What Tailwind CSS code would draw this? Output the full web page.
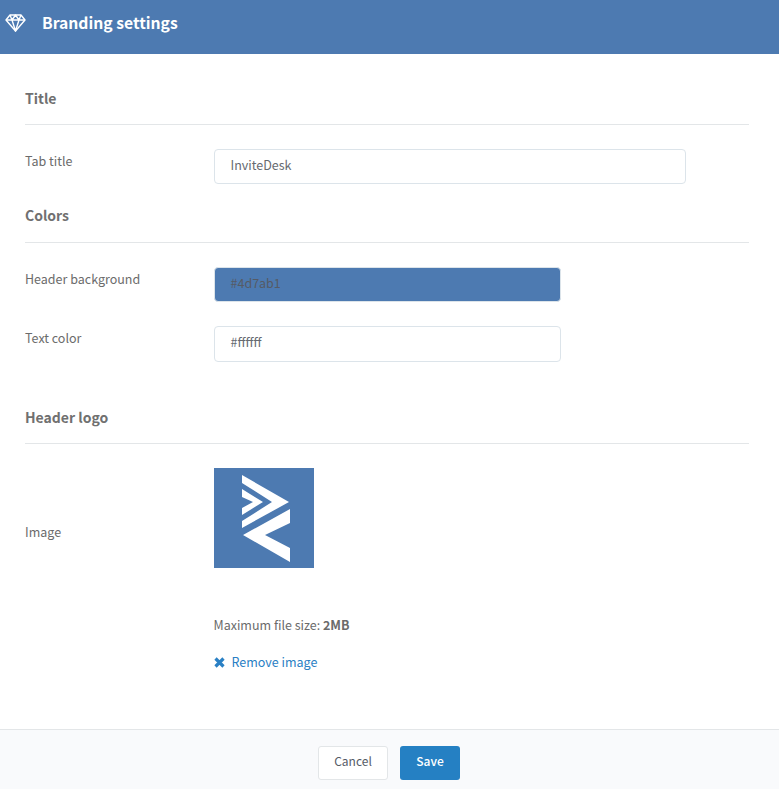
<!DOCTYPE html>
<html>
<head>
<meta charset="utf-8">
<script src="https://cdn.jsdelivr.net/npm/@tailwindcss/browser@4"></script>
</head>
<body class="bg-white text-[12.500px] text-[#6b6b6b] font-['Noto_Sans_CJK_SC','Source_Sans_Pro',sans-serif] overflow-hidden">
<div class="w-[779px] h-[789px] flex flex-col">
  <header class="h-[54px] bg-[#4d7ab1] flex items-center pb-[8px] pl-[5px] text-white shrink-0">
    <svg class="w-[21px] h-[18px]" viewBox="0 0 21 18" fill="none" stroke="white" stroke-width="1.400" stroke-linejoin="round"><path d="M5 1h11l4 5-9.500 11L1 6z"/><path d="M1 6h19M7 6l3.500 11L14 6M5 1l2 5 3.500-5 3.500 5 2-5"/></svg>
    <span class="ml-[16px] text-[15.700px] font-bold leading-[22px]">Branding settings</span>
  </header>
  <main class="flex-1 pl-[25px] pr-[30px]">
    <h2 class="mt-[32px] h-[39px] border-b border-[#e3e6e8] text-[14px] leading-[24px] font-bold text-[#707070]">Title</h2>
    <div class="mt-[24px] flex">
      <label class="w-[189px] leading-[24px]">Tab title</label>
      <div class="w-[472px] h-[35px] rounded-[4px] border border-[#dce4ea] pl-[15.500px] pr-[16px] leading-[30px] text-[#666a70]">InviteDesk</div>
    </div>
    <h2 class="mt-[19px] h-[40px] border-b border-[#e3e6e8] text-[14px] leading-[24px] font-bold text-[#707070]">Colors</h2>
    <div class="mt-[24px] flex">
      <label class="w-[189px] leading-[24px]">Header background</label>
      <div class="w-[347px] h-[35px] rounded-[4px] border border-[#dce4ea] bg-[#4d7ab1] pl-[15.500px] pr-[16px] leading-[30px] text-[#555b66]">#4d7ab1</div>
    </div>
    <div class="mt-[24px] flex">
      <label class="w-[189px] leading-[24px]">Text color</label>
      <div class="w-[347px] h-[36px] rounded-[4px] border border-[#dce4ea] pl-[15.500px] pr-[16px] leading-[30px] text-[#666a70]">#ffffff</div>
    </div>
    <h2 class="mt-[43px] h-[39px] border-b border-[#e3e6e8] text-[14px] leading-[24px] font-bold text-[#707070]">Header logo</h2>
    <div class="mt-[24px] flex">
      <label class="w-[189px] pt-[52px] leading-[24px]">Image</label>
      <div>
        <svg class="w-[100px] h-[100px] block" viewBox="0 0 100 100"><rect width="100" height="100" fill="#4d7ab1"/><path fill="white" d="M28 7 75 34 28 60V53L58 34 28 15z"/><path fill="white" d="M28 21 49 34 28 47V40L39 34 28 29z"/><path fill="white" d="M76 41V55L51 67 76 80V94L29 67z"/></svg>
        <p class="mt-[46px] leading-[22px] -ml-[0.500px]">Maximum file size: <b>2MB</b></p>
        <p class="mt-[15px] leading-[22px] text-[#2a80c4] flex items-center">
          <svg class="w-[11px] h-[11px] mr-[6.500px]" viewBox="0 0 11 11" fill="none" stroke="#2a80c4" stroke-width="3.200"><path d="M1.500 1.500l8 8M9.500 1.500l-8 8"/></svg>Remove image</p>
      </div>
    </div>
  </main>
  <footer class="h-[60px] border-t border-[#e3e6e8] bg-[#f9fafc] flex justify-center gap-[12px] pt-[16px] pr-[1px] shrink-0">
    <button class="w-[70px] h-[34px] bg-white border border-[#e3e6e8] rounded-[3px] text-[12px] pb-[4px] text-[#555b66]">Cancel</button>
    <button class="w-[60px] h-[34px] bg-[#2580c3] rounded-[3px] text-[12px] pb-[4px] text-white font-medium">Save</button>
  </footer>
</div>
</body>
</html>
